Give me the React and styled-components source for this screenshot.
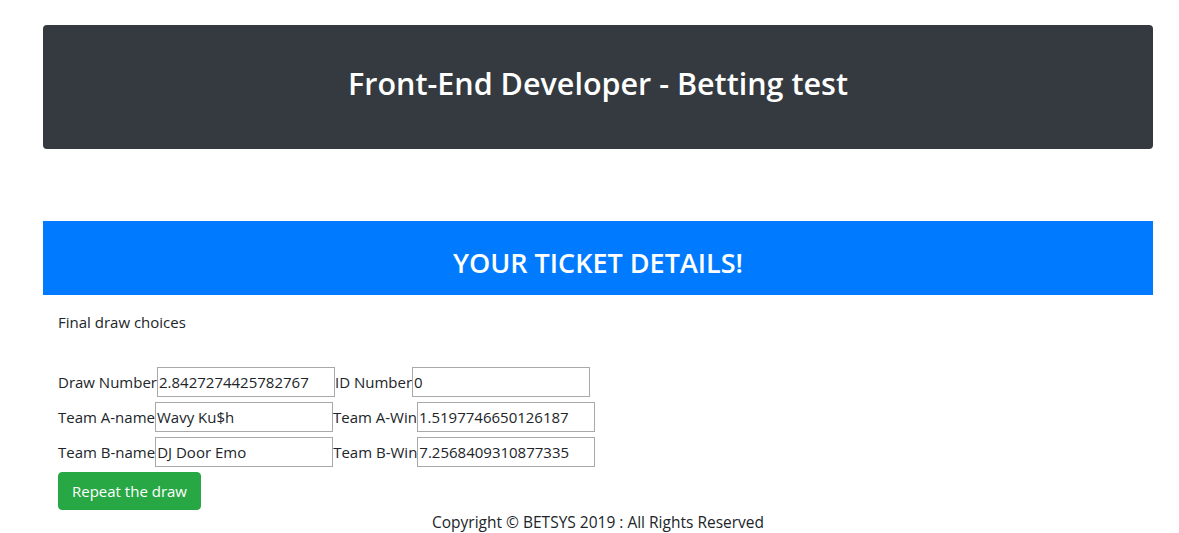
import React from 'react';
import styled, { createGlobalStyle } from 'styled-components';

const Global = createGlobalStyle`
  body {
    margin: 0;
    font-family: "Open Sans", "Liberation Sans", sans-serif;
    color: #212529;
    background: #fff;
  }
`;

const Page = styled.div`
  width: 1110px;
  margin: 25px 0 0 43px;
`;

const Jumbo = styled.div`
  background: #343a40;
  border-radius: 4px;
  height: 124px;
  box-sizing: border-box;
  padding-bottom: 9px;
  display: flex;
  align-items: center;
  justify-content: center;
`;

const Title = styled.h1`
  margin: 0;
  color: #fff;
  font-size: 30.5px;
  font-weight: 600;
`;

const Banner = styled.div`
  margin-top: 72px;
  background: #007bff;
  height: 74px;
  box-sizing: border-box;
  padding-top: 8px;
  display: flex;
  align-items: center;
  justify-content: center;
`;

const BannerTitle = styled.h2`
  margin: 0;
  color: #fff;
  font-size: 27px;
  font-weight: 600;
`;

const Body = styled.div`
  padding: 17px 15px 0;
  font-size: 15px;
`;

const Intro = styled.p`
  margin: 0 0 35px;
`;

const Row = styled.div`
  display: flex;
  align-items: center;
  margin-bottom: 5px;
`;

const Field = styled.input`
  box-sizing: border-box;
  width: 178px;
  height: 30px;
  border: 1px solid #a9a9a9;
  padding: 0 1px;
  font-family: inherit;
  font-size: 15px;
  color: #212529;
`;

const Button = styled.button`
  background: #28a745;
  border: 1px solid #28a745;
  border-radius: 4px;
  color: #fff;
  font-family: inherit;
  font-size: 15px;
  height: 38px;
  padding: 0 13px;
`;

const Footer = styled.footer`
  text-align: center;
  font-size: 15.5px;
  margin-top: 1px;
`;

const rows = [
  ['Draw Number', '2.8427274425782767', 'ID Number', '0'],
  ['Team A-name', 'Wavy Ku$h', 'Team A-Win', '1.5197746650126187'],
  ['Team B-name', 'DJ Door Emo', 'Team B-Win', '7.2568409310877335'],
];

export default function App() {
  return (
    <>
      <Global />
      <Page>
        <Jumbo>
          <Title>Front-End Developer - Betting test</Title>
        </Jumbo>
        <Banner>
          <BannerTitle>YOUR TICKET DETAILS!</BannerTitle>
        </Banner>
        <Body>
          <Intro>Final draw choices</Intro>
          {rows.map(([l1, v1, l2, v2]) => (
            <Row key={l1}>
              <span>{l1}</span>
              <Field defaultValue={v1} />
              <span>{l2}</span>
              <Field defaultValue={v2} />
            </Row>
          ))}
          <Button>Repeat the draw</Button>
        </Body>
        <Footer>Copyright © BETSYS 2019 : All Rights Reserved</Footer>
      </Page>
    </>
  );
}
